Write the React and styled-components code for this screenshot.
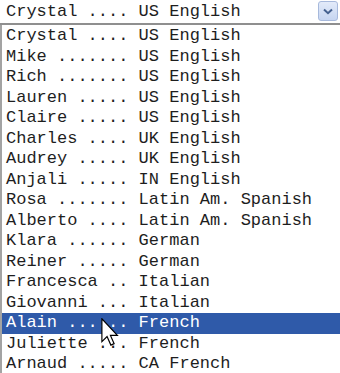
import React from "react";
import styled, { createGlobalStyle } from "styled-components";

const Global = createGlobalStyle`
  html, body { margin: 0; padding: 0; background: #ffffff; }
  body { width: 340px; height: 373px; overflow: hidden; }
`;

const Wrap = styled.div`
  position: relative;
  width: 340px;
  height: 373px;
  overflow: hidden;
  background: #fff;
  font-family: "Liberation Mono", "Courier New", monospace;
  font-size: 17px;
  color: #1e1e1e;
`;

const SelectBox = styled.div`
  display: flex;
  align-items: center;
  justify-content: space-between;
  height: 25px;
  padding: 0 2px 1px 6px;
  box-sizing: border-box;
  border-bottom: 2px solid #8f8f8f;
  white-space: pre;
`;

const DropButton = styled.div`
  width: 20px;
  height: 20px;
  box-sizing: border-box;
  border: 1px solid #a7b9dc;
  border-radius: 3px;
  background: linear-gradient(#e3ebfa, #c6d5f1);
  display: flex;
  align-items: center;
  justify-content: center;
`;

const List = styled.div`
  display: flex;
  flex-direction: column;
  border-left: 2px solid #a3a3a3;
  padding-top: 1px;
`;

const Row = styled.div`
  height: 20.5px;
  line-height: 20.5px;
  padding-left: 4px;
  white-space: pre;
  background: ${(p) => (p.$selected ? "#2f5aa9" : "transparent")};
  color: ${(p) => (p.$selected ? "#ffffff" : "#1e1e1e")};
`;

const Cursor = styled.svg`
  position: absolute;
  left: 101px;
  top: 318px;
`;

const items = [
  ["Crystal", "US English"],
  ["Mike", "US English"],
  ["Rich", "US English"],
  ["Lauren", "US English"],
  ["Claire", "US English"],
  ["Charles", "UK English"],
  ["Audrey", "UK English"],
  ["Anjali", "IN English"],
  ["Rosa", "Latin Am. Spanish"],
  ["Alberto", "Latin Am. Spanish"],
  ["Klara", "German"],
  ["Reiner", "German"],
  ["Francesca", "Italian"],
  ["Giovanni", "Italian"],
  ["Alain", "French"],
  ["Juliette", "French"],
  ["Arnaud", "CA French"],
];

const fmt = (name, lang) => {
  const dots = ".".repeat(Math.max(2, 12 - name.length - 1));
  return `${name} ${dots} ${lang}`;
};

export default function App() {
  return (
    <Wrap>
      <Global />
      <SelectBox>
        <span>{fmt("Crystal", "US English")}</span>
        <DropButton>
          <svg width="10" height="7" viewBox="0 0 10 7">
            <path d="M1 1.5 L5 5.2 L9 1.5" fill="none" stroke="#44608f" strokeWidth="2" />
          </svg>
        </DropButton>
      </SelectBox>
      <List>
        {items.map(([n, l]) => (
          <Row key={n} $selected={n === "Alain"}>
            {fmt(n, l)}
          </Row>
        ))}
      </List>
      <Cursor width="18" height="28" viewBox="0 0 12 19">
        <path
          d="M0.5 0.5 L0.5 16 L4 12.6 L6.6 18.4 L8.8 17.4 L6.3 11.8 L11 11.8 Z"
          fill="#ffffff"
          stroke="#000000"
          strokeWidth="0.8"
          strokeLinejoin="miter"
        />
      </Cursor>
    </Wrap>
  );
}
